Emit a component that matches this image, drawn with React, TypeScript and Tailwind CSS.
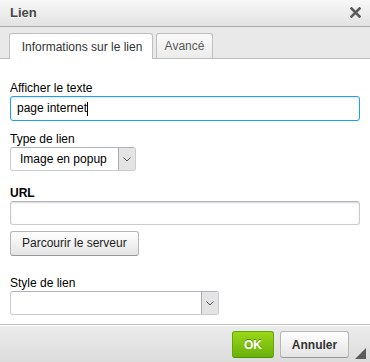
export default function App() {
  return (
    <div className="w-[370px] h-[362px] flex flex-col bg-white text-[12px] text-black font-['Liberation_Sans',Arial,sans-serif] overflow-hidden">
      {/* Title bar */}
      <div className="h-[27px] flex-shrink-0 flex items-center justify-between pl-[10px] pr-[9px] border-b border-[#a9a9a9] bg-gradient-to-b from-[#f8f8f8] to-[#e2e2e2]">
        <span className="text-[13px] font-bold text-[#474747] [text-shadow:0_1px_0_#fff]">Lien</span>
        <svg width="11" height="11" viewBox="0 0 11 11" className="mt-[-1px]">
          <path d="M1.5 1.5L9.5 9.5M9.5 1.5L1.5 9.5" stroke="#5a5a5a" strokeWidth="2.6" strokeLinecap="square" />
        </svg>
      </div>

      {/* Tabs */}
      <div className="h-[32px] flex-shrink-0 flex items-end gap-[3px] px-[9px] bg-[#e9e9e9] border-b border-[#bfbfbf]">
        <div className="w-[144px] h-[26px] -mb-px flex items-center justify-center bg-white border border-b-0 border-[#bfbfbf] rounded-t-[3px] text-[#333] leading-[14px]">
          <span className="pl-[2px]">Informations sur le lien</span>
        </div>
        <div className="w-[57px] h-[25px] flex items-center justify-center border border-b-0 border-[#bfbfbf] rounded-t-[3px] bg-gradient-to-b from-[#fafafa] to-[#ececec] text-[#595959] leading-[14px]">
          Avancé
        </div>
      </div>

      {/* Content */}
      <div className="flex flex-col px-[10px] pt-[22px]">
        <label className="leading-[15px]">Afficher le texte</label>
        <div className="h-[25px] flex items-center px-[6px] border border-[#1ea0f2] rounded-[3px] shadow-[inset_0_1px_2px_rgba(0,0,0,0.1)]">
          <span className="leading-[15px]">page internet</span>
          <span className="w-px h-[14px] bg-black" />
        </div>

        <label className="mt-[11px] leading-[15px]">Type de lien</label>
        <div className="w-[126px] h-[24px] flex border border-[#c9cccf] border-t-[#aeb3b9] rounded-[3px] bg-white">
          <div className="flex-1 flex items-center pl-[9px] leading-[15px]">Image en popup</div>
          <div className="w-[17px] flex items-center justify-center bg-[#e4e4e4] border-l border-[#acacac] rounded-r-[2px]">
            <svg width="8" height="5" viewBox="0 0 8 5">
              <path d="M0.5 0.5L4 4L7.5 0.5" fill="none" stroke="#555" strokeWidth="1" />
            </svg>
          </div>
        </div>

        <label className="mt-[15px] leading-[15px] font-bold">URL</label>
        <div className="h-[24px] border border-[#c9cccf] border-t-[#aeb3b9] rounded-[3px] shadow-[inset_0_1px_2px_rgba(0,0,0,0.15)]" />

        <div className="mt-[6px] self-start h-[25px] flex items-center px-[11px] border border-[#b6b6b6] border-b-[#999] rounded-[3px] bg-gradient-to-b from-white to-[#e4e4e4] text-[#222] leading-[15px]">
          Parcourir le serveur
        </div>

        <label className="mt-[20px] leading-[15px]">Style de lien</label>
        <div className="w-[209px] h-[24px] flex border border-[#c9cccf] border-t-[#aeb3b9] rounded-[3px] bg-white">
          <div className="flex-1" />
          <div className="w-[17px] flex items-center justify-center bg-[#e4e4e4] border-l border-[#acacac] rounded-r-[2px]">
            <svg width="8" height="5" viewBox="0 0 8 5">
              <path d="M0.5 0.5L4 4L7.5 0.5" fill="none" stroke="#555" strokeWidth="1" />
            </svg>
          </div>
        </div>
      </div>

      {/* Footer */}
      <div className="relative mt-auto h-[38px] flex justify-end items-start gap-[6px] pt-[6px] pr-[21px] border-t border-[#bfbfbf] bg-gradient-to-b from-[#ececec] to-[#dcdcdc] shadow-[inset_0_1px_0_#fff]">
        <div className="h-[27px] w-[42px] flex items-center justify-center border border-[#62a60a] border-b-[#4d9200] rounded-[3px] bg-gradient-to-b from-[#9ad717] to-[#69b10b] text-white font-bold [text-shadow:0_-1px_0_#55830c]">
          OK
        </div>
        <div className="h-[27px] w-[69px] flex items-center justify-center border border-[#b6b6b6] border-b-[#999] rounded-[3px] bg-gradient-to-b from-white to-[#e4e4e4] text-[#333] font-bold">
          Annuler
        </div>
        <svg width="11" height="11" viewBox="0 0 11 11" className="absolute right-[4px] bottom-[3px]">
          <path d="M11 0L11 11L0 11Z" fill="#5c5c5c" />
        </svg>
      </div>
    </div>
  );
}
